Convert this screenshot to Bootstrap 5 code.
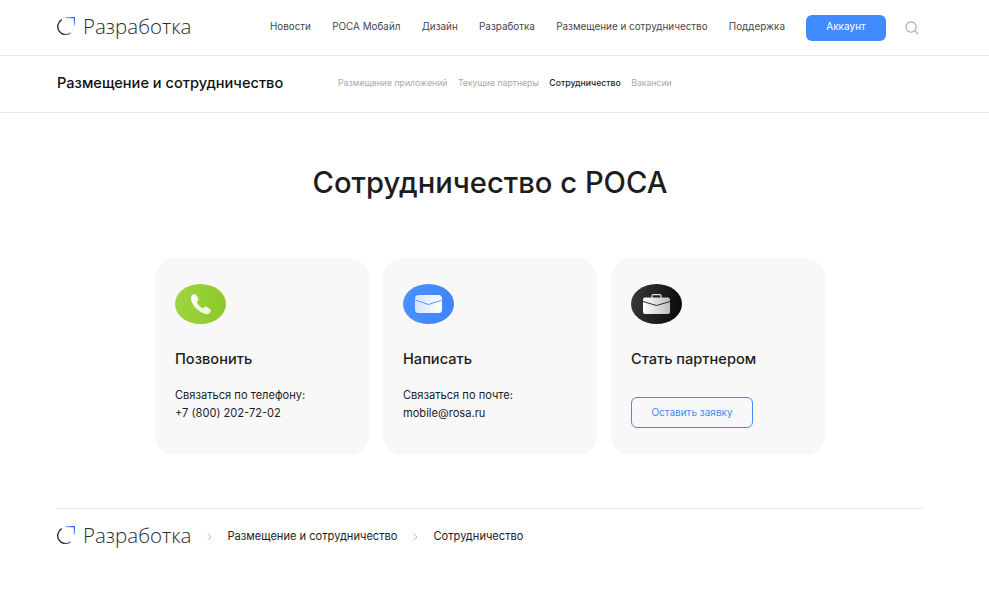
<!DOCTYPE html>
<html lang="ru">
<head>
    <meta charset="UTF-8">
    <meta name="viewport" content="width=device-width, initial-scale=1.0">
    <title>Сотрудничество с РОСА</title>
    <link rel="stylesheet" href="https://cdn.jsdelivr.net/npm/bootstrap@5.3.0/dist/css/bootstrap.min.css">
    <style>
        body { font-family: Inter, "Liberation Sans", sans-serif; color: #1d1d1f; background: #fff; }
        a { text-decoration: none; color: inherit; }
        .wrap { margin: 0 66px 0 57px; }
        .top-bar { height: 56px; border-bottom: 1px solid #e8e8e8; }
        .logo-link { gap: 8px; }
        .logo-mark { margin-bottom: 4px; }
        .logo-text { margin-top: -3px; font-family: "Open Sans", sans-serif; font-weight: 300; font-size: 20.5px; line-height: 24px; color: #2b2b2e; }
        .main-links { gap: 21.3px; margin-bottom: 3px; font-size: 9.9px; color: #47474a; }
        .acct-btn { width: 80px; height: 26px; margin-left: 21px; padding: 0 0 3px; background: #3f8bff; border: 0; border-radius: 6px; color: #fff; font-size: 10px; line-height: 20px; }
        .search-ico { margin: 0 4px 0 19px; }
        .sub-bar { height: 57px; border-bottom: 1px solid #e8e8e8; }
        .sub-inner { padding-bottom: 1px; }
        .sub-title { width: 281px; font-size: 14.6px; font-weight: 500; color: #111; }
        .sub-links { gap: 10.5px; font-size: 8.7px; color: #a9a9ab; }
        .sub-links .on { color: #1d1d1f; font-weight: 500; }
        .page-title { margin: 51px 0 56px; font-size: 29.2px; line-height: 38px; font-weight: 500; text-align: center; color: #1d1d1f; }
        .tiles { gap: 14px; width: 670px; margin: 0 auto; }
        .tile { width: 214px; height: 197px; padding: 26px 20px 0; background: #f8f8f8; border-radius: 20px; }
        .tile-ico { width: 51px; height: 40px; border-radius: 50%; }
        .ico-green { background: linear-gradient(100deg, #a0d544, #8ac926); }
        .ico-blue { background: linear-gradient(100deg, #4a92ff, #3f84fb); }
        .ico-black { background: linear-gradient(100deg, #3a3a3a, #070707); }
        .tile-name { margin: 25px 0 0; font-size: 14.6px; line-height: 20px; font-weight: 500; color: #1d1d1f; }
        .tile-text { margin: 17px 0 0; font-size: 11.1px; line-height: 18px; color: #1d1d1f; }
        .apply-btn { display: block; width: 122px; height: 31px; margin-top: 28px; padding: 0; background: transparent; border: 1px solid #3f8bff; border-radius: 6px; color: #4a86f7; font-size: 10px; line-height: 29px; }
        .foot-crumbs { margin-top: 53px; height: 56px; border-top: 1px solid #e8e8e8; font-size: 11.1px; color: #1d1d1f; }
        .crumb-sep { margin: 0 15px 0 16px; }
    </style>
</head>
<body>
<svg width="0" height="0" class="d-block">
    <defs>
        <radialGradient id="lg" gradientUnits="userSpaceOnUse" cx="17" cy="1" r="10">
            <stop offset="0" stop-color="#2a55f5"/>
            <stop offset="0.6" stop-color="#7f9cf5"/>
            <stop offset="1" stop-color="#d5dcf5"/>
        </radialGradient>
        <linearGradient id="la" gradientUnits="userSpaceOnUse" x1="2" y1="6" x2="14" y2="16">
            <stop offset="0" stop-color="#2b2b2e"/>
            <stop offset="0.7" stop-color="#2b2b2e"/>
            <stop offset="1" stop-color="#9b9ba0"/>
        </linearGradient>
    </defs>
</svg>
<header class="top-bar">
    <div class="wrap h-100 d-flex align-items-center justify-content-between">
        <a href="#" class="logo-link d-flex align-items-center">
            <svg class="logo-mark" width="18" height="18" viewBox="0 0 18 18" fill="none">
                <path d="M4.700 2.670A8 8 0 1 0 13.700 15.850" stroke="url(#la)" stroke-width="1.400"/>
                <path d="M8 .6h9.400V8.500" stroke="url(#lg)" stroke-width="1.200"/>
            </svg>
            <span class="logo-text">Разработка</span>
        </a>
        <nav class="d-flex align-items-center">
            <div class="main-links d-flex">
                <a href="#">Новости</a>
                <a href="#">РОСА Мобайл</a>
                <a href="#">Дизайн</a>
                <a href="#">Разработка</a>
                <a href="#">Размещение и сотрудничество</a>
                <a href="#">Поддержка</a>
            </div>
            <button type="button" class="btn acct-btn">Аккаунт</button>
            <svg class="search-ico" width="14" height="14" viewBox="0 0 15 15" fill="none" stroke="#a8a8aa" stroke-width="1.200"><circle cx="6.500" cy="6.500" r="5.500"/><path d="M10.600 10.600l3.400 3.400"/></svg>
        </nav>
    </div>
</header>
<div class="sub-bar">
    <div class="wrap sub-inner h-100 d-flex align-items-center">
        <div class="sub-title">Размещение и сотрудничество</div>
        <div class="sub-links d-flex">
            <a href="#">Размещение приложений</a>
            <a href="#">Текущие партнеры</a>
            <a href="#" class="on">Сотрудничество</a>
            <a href="#">Вакансии</a>
        </div>
    </div>
</div>
<main class="wrap">
    <h1 class="page-title">Сотрудничество с РОСА</h1>
    <div class="tiles d-flex">
        <div class="tile">
            <div class="tile-ico ico-green d-flex align-items-center justify-content-center">
                <svg width="22" height="22" viewBox="0 0 22 22"><defs><linearGradient id="gp" x1="0" y1="0" x2="1" y2="1"><stop offset="0" stop-color="#fff"/><stop offset="1" stop-color="#e6f4cc"/></linearGradient></defs><path d="M3 1.500C4 .7 5.500 .8 6.200 2L8.300 5.600C8.900 6.600 8.600 7.500 7.800 8.100L6.800 8.900C7.600 11.500 10.400 14.300 13.200 15.200L14 14.200C14.700 13.400 15.600 13.200 16.500 13.700L20 15.900C21.100 16.600 21.300 18 20.500 18.900L19 20.400C18 21.200 16.500 21.400 15 20.900C8.500 18.900 3 13.500 1.200 7C.7 5 1.400 2.700 3 1.500Z" fill="url(#gp)"/></svg>
            </div>
            <h2 class="tile-name">Позвонить</h2>
            <p class="tile-text">Связаться по телефону:<br>+7 (800) 202-72-02</p>
        </div>
        <div class="tile">
            <div class="tile-ico ico-blue d-flex align-items-center justify-content-center">
                <svg width="27" height="18" viewBox="0 0 27 18"><defs><linearGradient id="gm" x1="0" y1="0" x2="1" y2="0"><stop offset="0" stop-color="#d3e4ff"/><stop offset="1" stop-color="#fff"/></linearGradient></defs><rect width="27" height="18" rx="3.500" fill="url(#gm)"/><path d="M0.500 5.200L13.500 9.500l13-4.300" fill="none" stroke="#5b97fb" stroke-width="1"/></svg>
            </div>
            <h2 class="tile-name">Написать</h2>
            <p class="tile-text">Связаться по почте:<br>mobile@rosa.ru</p>
        </div>
        <div class="tile">
            <div class="tile-ico ico-black d-flex align-items-center justify-content-center">
                <svg width="27" height="20" viewBox="0 0 27 20"><defs><linearGradient id="gb" x1="0" y1="0" x2="1" y2="0"><stop offset="0" stop-color="#fff"/><stop offset="1" stop-color="#bdbdbd"/></linearGradient></defs><path d="M9 4V2q0-1.300 1.300-1.300h6.400q1.300 0 1.300 1.300v2" fill="none" stroke="#e2e2e2" stroke-width="1.200"/><rect y="3.500" width="27" height="16.500" rx="2" fill="url(#gb)"/><path d="M0 7.500L13.500 11.500l13.500-4" fill="none" stroke="#2a2a2a" stroke-width="1"/></svg>
            </div>
            <h2 class="tile-name">Стать партнером</h2>
            <button type="button" class="btn apply-btn">Оставить заявку</button>
        </div>
    </div>
    <div class="foot-crumbs d-flex align-items-center">
        <a href="#" class="logo-link d-flex align-items-center">
            <svg class="logo-mark" width="18" height="18" viewBox="0 0 18 18" fill="none">
                <path d="M4.700 2.670A8 8 0 1 0 13.700 15.850" stroke="url(#la)" stroke-width="1.400"/>
                <path d="M8 .6h9.400V8.500" stroke="url(#lg)" stroke-width="1.200"/>
            </svg>
            <span class="logo-text">Разработка</span>
        </a>
        <svg class="crumb-sep" width="5" height="8" viewBox="0 0 5 8" fill="none" stroke="#bdbdbd"><path d="M.7.7L4 4 .7 7.300"/></svg>
        <a href="#">Размещение и сотрудничество</a>
        <svg class="crumb-sep" width="5" height="8" viewBox="0 0 5 8" fill="none" stroke="#bdbdbd"><path d="M.7.7L4 4 .7 7.300"/></svg>
        <a href="#">Сотрудничество</a>
    </div>
</main>
<script src="https://cdn.jsdelivr.net/npm/bootstrap@5.3.0/dist/js/bootstrap.bundle.min.js"></script>
</body>
</html>
